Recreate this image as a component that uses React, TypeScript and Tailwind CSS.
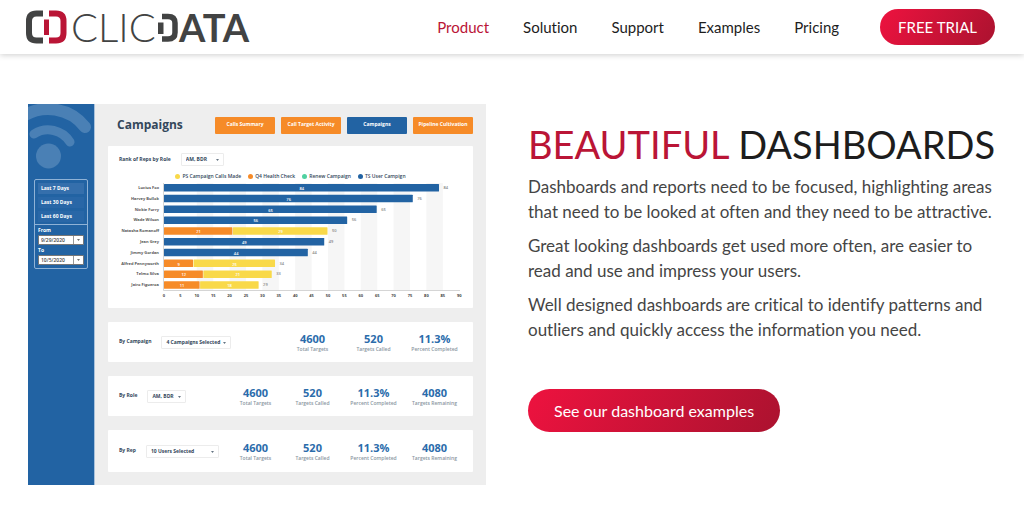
import { clsx } from "clsx";

const NAV_ITEMS = [
  { label: "Product", href: "#product", active: true },
  { label: "Solution", href: "#solution" },
  { label: "Support", href: "#support" },
  { label: "Examples", href: "#examples" },
  { label: "Pricing", href: "#pricing" },
];

const TABS = ["Calls Summary", "Call Target Activity", "Campaigns", "Pipeline Cultivation"];

const LEGEND = [
  { label: "PS Campaign Calls Made", dot: "bg-[#f9d949]" },
  { label: "Q4 Health Check", dot: "bg-[#f68b28]" },
  { label: "Renew Campaign", dot: "bg-[#4fd1a1]" },
  { label: "TS User Campign", dot: "bg-[#2263a3]" },
];

type Rep = { name: string; total: number; parts: { value: number; fill: string }[] };

const BLUE = "#2263a3";
const ORANGE = "#f68b28";
const YELLOW = "#f9d949";

const REPS: Rep[] = [
  { name: "Lucius Fox", total: 84, parts: [{ value: 84, fill: BLUE }] },
  { name: "Harvey Bullok", total: 76, parts: [{ value: 76, fill: BLUE }] },
  { name: "Nickie Furry", total: 65, parts: [{ value: 65, fill: BLUE }] },
  { name: "Wade Wilson", total: 56, parts: [{ value: 56, fill: BLUE }] },
  { name: "Natasha Romanoff", total: 50, parts: [{ value: 21, fill: ORANGE }, { value: 29, fill: YELLOW }] },
  { name: "Jean Grey", total: 49, parts: [{ value: 49, fill: BLUE }] },
  { name: "Jimmy Gordan", total: 44, parts: [{ value: 44, fill: BLUE }] },
  { name: "Alfred Pennyworth", total: 34, parts: [{ value: 9, fill: ORANGE }, { value: 25, fill: YELLOW }] },
  { name: "Telmo Silva", total: 33, parts: [{ value: 12, fill: ORANGE }, { value: 21, fill: YELLOW }] },
  { name: "Jairo Figueroa", total: 29, parts: [{ value: 11, fill: ORANGE }, { value: 18, fill: YELLOW }] },
];

const TARGETS = { value: "4600", label: "Total Targets" };
const CALLED = { value: "520", label: "Targets Called" };
const COMPLETED = { value: "11.3%", label: "Percent Completed" };
const REMAINING = { value: "4080", label: "Targets Remaining" };

function Logo() {
  return (
    <svg viewBox="0 0 224 34" className="h-[34px] w-[224px] overflow-visible" role="img" aria-label="ClicData">
      <path d="M18 3.5H11.5Q4 3.5 4 11V23Q4 30.5 11.5 30.5H18" fill="none" stroke="#424343" strokeWidth="6" />
      <path d="M24 3.5H31Q38.5 3.5 38.5 11V23Q38.5 30.5 31 30.5H24" fill="none" stroke="#ba1536" strokeWidth="6" />
      <rect x="19" y="9.5" width="5" height="15.5" fill="#ba1536" />
      <text x="46" y="32" fontSize="40" className="fill-[#424343] font-[Lato] font-light">CLIC</text>
      <rect x="133" y="12.5" width="5.5" height="11.5" fill="#424343" />
      <path d="M137 6.5H143Q150 6.5 150 13V22.5Q150 29 143 29H137" fill="none" stroke="#424343" strokeWidth="5.5" />
      <text x="154" y="32" fontSize="38" className="fill-[#424343] font-[Lato] font-bold">ATA</text>
    </svg>
  );
}

function Header() {
  return (
    <header className="flex h-[54px] items-center justify-between bg-white pr-[29px] pl-[25px] shadow-[0_1px_6px_rgba(0,0,0,0.2)]">
      <a href="#home">
        <Logo />
      </a>
      <div className="flex items-center gap-[41px]">
        <nav className="flex gap-[34px]">
          {NAV_ITEMS.map((item) => (
            <a
              key={item.label}
              href={item.href}
              className={clsx("text-[15px] leading-5", item.active ? "text-[#ba1536]" : "text-[#1d1d1d]")}
            >
              {item.label}
            </a>
          ))}
        </nav>
        <a
          href="#trial"
          className="rounded-full bg-linear-120 from-[#ee123f] to-[#ab122f] px-[18px] py-2 text-[15px] leading-5 text-white"
        >
          FREE TRIAL
        </a>
      </div>
    </header>
  );
}

function Picker({ label, value, width }: { label: string; value: string; width: string }) {
  return (
    <label className="flex items-center gap-[10px] text-[5px] font-bold whitespace-nowrap text-[#33475b]">
      {label}
      <span className={clsx("relative block shrink-0", width)}>
        <select className="block h-[13px] w-full appearance-none rounded-[1px] border border-[#ececec] bg-white pl-1 text-[5px] leading-[11px] font-bold text-[#33475b]">
          <option>{value}</option>
        </select>
        <svg viewBox="0 0 4 2" className="pointer-events-none absolute top-[6px] right-[5px] h-[2px] w-[3px]">
          <path d="M0 0H4L2 2Z" fill="#33475b" />
        </svg>
      </span>
    </label>
  );
}

function DateField({ label, value }: { label: string; value: string }) {
  return (
    <label className="block text-[5px] leading-[10px] font-bold text-white">
      {label}
      <span className="flex h-[10px] items-center rounded-[1px] border border-[#777] bg-white">
        <input
          type="text"
          defaultValue={value}
          className="h-full w-0 flex-1 pl-[2px] text-[5px] leading-[8px] font-semibold text-[#444]"
        />
        <span className="flex h-full w-[10px] items-center justify-center border-l border-[#999]">
          <svg viewBox="0 0 4 2" className="h-[2px] w-[3px]">
            <path d="M0 0H4L2 2Z" fill="#444" />
          </svg>
        </span>
      </span>
    </label>
  );
}

function Sidebar() {
  return (
    <aside className="w-[67px] shrink-0 border-r border-[#a9c2dc] bg-[#2263a3]">
      <svg viewBox="0 0 66 70" className="block h-[70px] w-[66px]" fill="none" stroke="#4a80b5" strokeLinecap="round">
        <path d="M-6 13A47 47 0 0 1 57 23" strokeWidth="12" />
        <path d="M6 30A26 26 0 0 1 42 38" strokeWidth="9" />
        <circle cx="20.5" cy="52" r="12.5" fill="#4a80b5" stroke="none" />
      </svg>
      <div className="mx-[6px] mt-[5px] rounded-[2px] border border-[#8fb2d6] text-[5px] font-bold text-white">
        <div className="flex flex-col gap-[3px] px-[3px] pt-[3px] pb-[2px]">
          <button className="h-[11px] bg-[#356fac] pl-[3px] text-left">Last 7 Days</button>
          <button className="h-[11px] bg-[#2967a7] pl-[3px] text-left">Last 30 Days</button>
          <button className="h-[11px] bg-[#2967a7] pl-[3px] text-left">Last 60 Days</button>
        </div>
        <div className="border-t border-[#8fb2d6] px-[3px] pb-[3px]">
          <DateField label="From" value="9/29/2020" />
          <DateField label="To" value="10/5/2020" />
        </div>
      </div>
    </aside>
  );
}

function RankChart() {
  const left = 56;
  const scale = 3.28;
  const ticks = Array.from({ length: 19 }, (_, i) => i * 5);

  return (
    <svg viewBox="0 0 365 128" className="block w-full" fontFamily="Open Sans, Noto Sans, sans-serif" fontSize="4">
      {ticks.filter((t) => t % 10 === 0 && t > 0 && t < 90).map((t) => (
        <rect key={t} x={left + t * scale} y="3" width={5 * scale} height="107" fill="#f6f6f6" />
      ))}
      {REPS.map((rep, row) => {
        const top = 4 + row * 10.8;
        let start = 0;
        return (
          <g key={rep.name}>
            <text x={left - 5} y={top + 5} textAnchor="end" fontWeight="700" fill="#555">
              {rep.name}
            </text>
            {rep.parts.map((part) => {
              const x = left + start * scale;
              const width = part.value * scale;
              start += part.value;
              return (
                <g key={part.fill}>
                  <rect x={x} y={top} width={width - 0.5} height="7.5" rx="0.5" fill={part.fill} />
                  <text x={x + width / 2} y={top + 6} textAnchor="middle" fontWeight="600" fill="#fff">
                    {part.value}
                  </text>
                </g>
              );
            })}
            <text x={left + rep.total * scale + 4} y={top + 5} fontWeight="600" fill="#888">
              {rep.total}
            </text>
          </g>
        );
      })}
      <path d="M55.5 3V110.5H352" fill="none" stroke="#d5d5d5" />
      {ticks.map((t) => (
        <text key={t} x={left + t * scale} y="117" textAnchor="middle" fontWeight="700" fill="#444">
          {t}
        </text>
      ))}
    </svg>
  );
}

type Stat = { value: string; label: string };

function StatsRow({ label, value, width, stats }: { label: string; value: string; width: string; stats: Stat[] }) {
  return (
    <section className="flex h-[40px] items-center justify-between rounded-[1px] bg-white pr-2 pl-[11px] last:h-[42px]">
      <Picker label={label} value={value} width={width} />
      <dl className="flex">
        {stats.map((stat) => (
          <div key={stat.label} className="flex w-[61px] flex-col-reverse text-center [&:nth-last-child(4)]:w-[53px]">
            <dt className="text-[5px] leading-[8px] font-semibold text-[#8a969f]">{stat.label}</dt>
            <dd className="text-[11px] leading-[13px] font-bold text-[#2b6cab]">{stat.value}</dd>
          </div>
        ))}
      </dl>
    </section>
  );
}

function CampaignDashboard() {
  return (
    <div className="flex min-w-0 bg-[#eeeeee] font-['Open_Sans','Noto_Sans',sans-serif]">
      <Sidebar />
      <div className="min-w-0 flex-1 px-[13px] pb-[13px]">
        <div className="flex h-[42px] items-center justify-between pl-[9px]">
          <h2 className="text-[12px] font-bold text-[#33475b]">Campaigns</h2>
          <div className="flex gap-[6px]">
            {TABS.map((tab) => (
              <button
                key={tab}
                className={clsx(
                  "h-[17px] w-[60px] rounded-[1px] text-[5px] font-bold whitespace-nowrap text-white",
                  tab === "Campaigns" ? "bg-[#2263a3]" : "bg-[#f68b28]"
                )}
              >
                {tab}
              </button>
            ))}
          </div>
        </div>
        <div className="flex flex-col gap-[14px]">
          <section className="rounded-[1px] bg-white pt-[7px]">
            <div className="pl-[11px]">
              <Picker label="Rank of Reps by Role" value="AM, BDR" width="w-[43px]" />
            </div>
            <ul className="mt-[6px] flex justify-center gap-[7px] text-[5px] leading-[8px] font-semibold text-[#33475b]">
              {LEGEND.map((item) => (
                <li key={item.label} className="flex items-center gap-[2px]">
                  <span className={clsx("size-[5px] rounded-full", item.dot)} />
                  {item.label}
                </li>
              ))}
            </ul>
            <RankChart />
          </section>
          <StatsRow label="By Campaign" value="4 Campaigns Selected" width="w-[70px]" stats={[TARGETS, CALLED, COMPLETED]} />
          <StatsRow label="By Role" value="AM, BDR" width="w-[39px]" stats={[TARGETS, CALLED, COMPLETED, REMAINING]} />
          <StatsRow label="By Rep" value="10 Users Selected" width="w-[73px]" stats={[TARGETS, CALLED, COMPLETED, REMAINING]} />
        </div>
      </div>
    </div>
  );
}

export default function App() {
  return (
    <div className="font-[Lato,sans-serif] [font-variant-ligatures:none]">
      <Header />
      <main className="grid grid-cols-[458fr_468fr] items-start gap-[42px] px-7 pt-[50px] pb-8">
        <CampaignDashboard />
        <div className="min-w-0 pt-4 text-[17px] leading-[25px] text-[#454545]">
          <h1 className="text-[38px] leading-[48px] whitespace-nowrap text-[#1d1d1d]">
            <span className="text-[#ba1536]">BEAUTIFUL</span> DASHBOARDS
          </h1>
          <div className="mt-[6px] flex flex-col gap-[9px]">
            <p>Dashboards and reports need to be focused, highlighting areas that need to be looked at often and they need to be attractive.</p>
            <p>Great looking dashboards get used more often, are easier to read and use and impress your users.</p>
            <p>Well designed dashboards are critical to identify patterns and outliers and quickly access the information you need.</p>
          </div>
          <a
            href="#examples"
            className="mt-[47px] inline-block rounded-full bg-linear-120 from-[#ee123f] to-[#ab122f] px-[26px] py-[9px] text-base leading-[25px] text-white"
          >
            See our dashboard examples
          </a>
        </div>
      </main>
    </div>
  );
}
